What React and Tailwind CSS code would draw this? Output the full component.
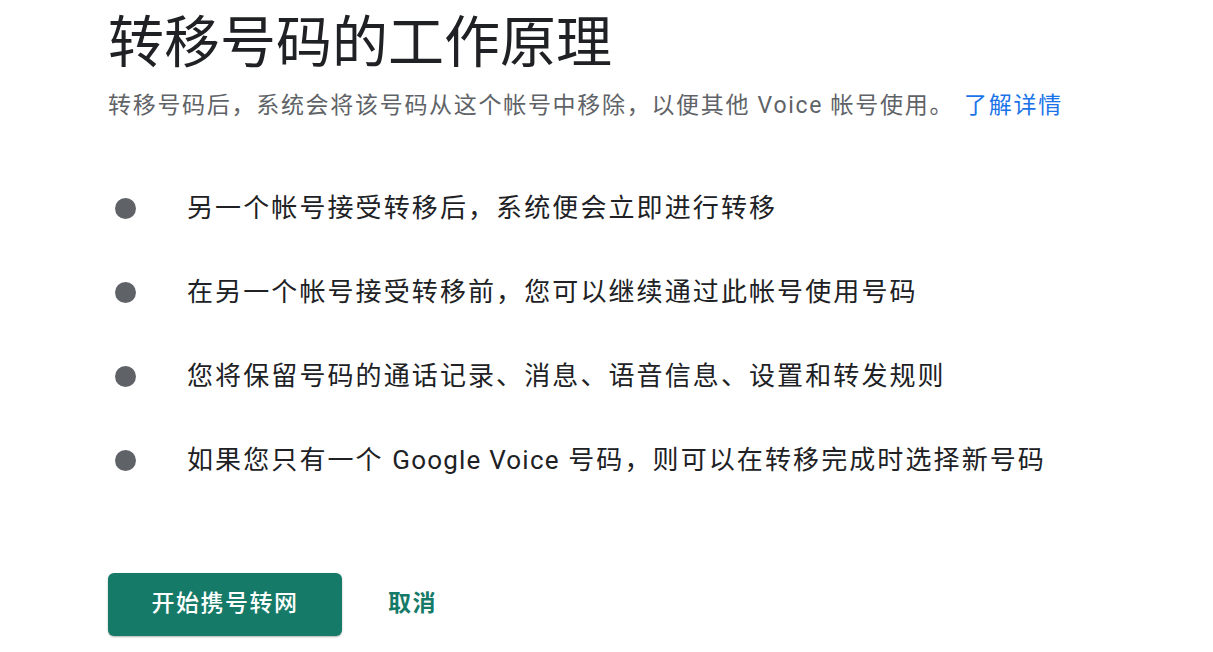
export default function App() {
  const items = [
    ["另一个帐号接受转移后，系统便会立即进行转移"],
    ["在另一个帐号接受转移前，您可以继续通过此帐号使用号码"],
    ["您将保留号码的通话记录、消息、语音信息、设置和转发规则"],
    ["如果您只有一个 ", "Google Voice", " 号码，则可以在转移完成时选择新号码"],
  ];
  return (
    <div
      className="w-[1213px] h-[652px] bg-white overflow-hidden pl-[108px]"
      style={{ fontFamily: 'Roboto, "Noto Sans CJK SC", sans-serif' }}
    >
      <h1 className="text-[56px] leading-[64px] text-[#202124] font-normal mt-[11px]">
        转移号码的工作原理
      </h1>
      <p className="mt-[16px] text-[23px] leading-[30px] tracking-[1.7px] text-[#5f6368]">
        转移号码后，系统会将该号码从这个帐号中移除，以便其他 Voice 帐号使用。
        <span className="ml-[10px] text-[#1a73e8]">了解详情</span>
      </p>
      <ul className="mt-[68px] flex flex-col gap-[46px]">
        {items.map((parts) => (
          <li key={parts.join("")} className="flex items-center h-[38px]">
            <span className="w-[21px] h-[21px] rounded-full bg-[#5f6368] ml-[7px] mr-[51px] shrink-0" />
            <span className="text-[26px] leading-[38px] tracking-[2.1px] text-[#202124]">
              {parts.length === 1 ? (
                parts[0]
              ) : (
                <>
                  {parts[0]}
                  <span className="tracking-[1.2px]">{parts[1]}</span>
                  {parts[2]}
                </>
              )}
            </span>
          </li>
        ))}
      </ul>
      <div className="mt-[94px] flex items-center">
        <button className="w-[234px] h-[63px] rounded-[6px] bg-[#167a68] text-white text-[23px] tracking-[1.5px] font-medium shadow-[0_1px_2px_rgba(0,0,0,0.3)]">
          开始携号转网
        </button>
        <button className="ml-[46px] text-[23px] font-semibold tracking-[1.5px] text-[#167a68]">
          取消
        </button>
      </div>
    </div>
  );
}
